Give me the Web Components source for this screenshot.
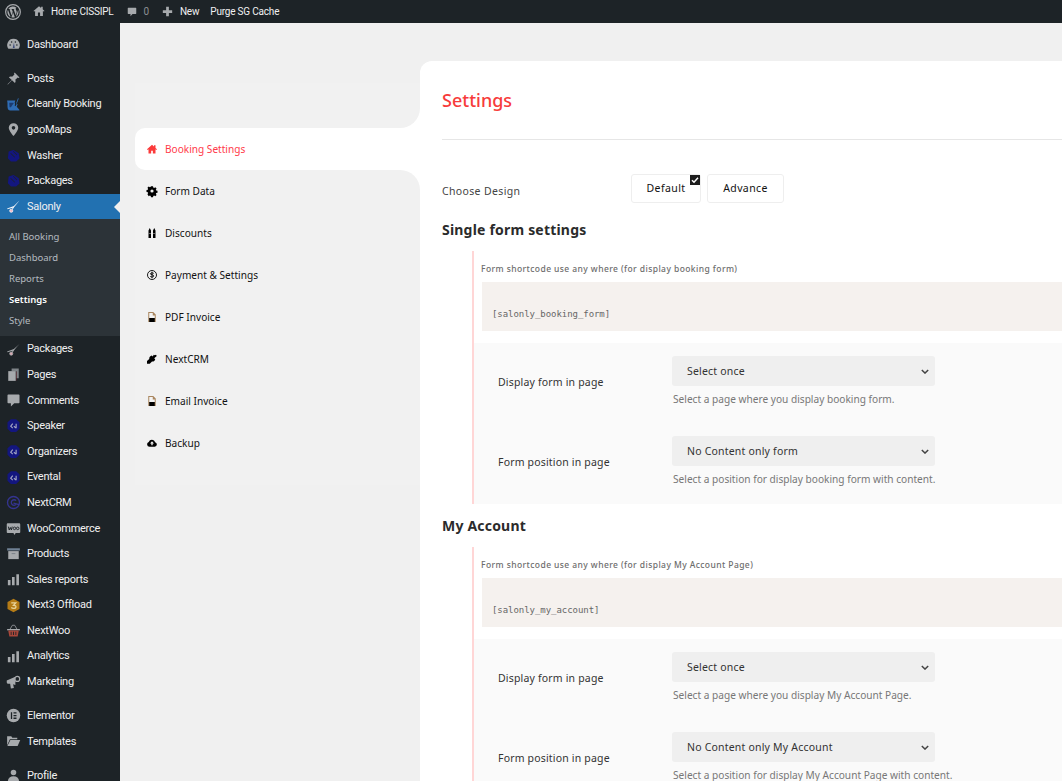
<!DOCTYPE html>
<html>
<head>
<meta charset="utf-8">
<title>Settings</title>
<style>
  html, body { margin: 0; height: 100%; overflow: hidden; background: #f0f0f0; }
  body { font-family: "Noto Sans", "Open Sans", sans-serif; }
</style>
</head>
<body>
<wp-shell>
  <wp-adminbar slot="bar"></wp-adminbar>
  <wp-sidebar slot="side">
    <wp-menu-item icon="dashboard">Dashboard</wp-menu-item>
    <wp-menu-sep></wp-menu-sep>
    <wp-menu-item icon="pin">Posts</wp-menu-item>
    <wp-menu-item icon="cleanly">Cleanly Booking</wp-menu-item>
    <wp-menu-item icon="location">gooMaps</wp-menu-item>
    <wp-menu-item icon="washer">Washer</wp-menu-item>
    <wp-menu-item icon="washer">Packages</wp-menu-item>
    <wp-menu-item icon="scissorsOn" current>Salonly</wp-menu-item>
    <wp-submenu>
      <wp-sub-item>All Booking</wp-sub-item>
      <wp-sub-item>Dashboard</wp-sub-item>
      <wp-sub-item>Reports</wp-sub-item>
      <wp-sub-item current>Settings</wp-sub-item>
      <wp-sub-item>Style</wp-sub-item>
    </wp-submenu>
    <wp-menu-item icon="scissors">Packages</wp-menu-item>
    <wp-menu-item icon="pages">Pages</wp-menu-item>
    <wp-menu-item icon="comment">Comments</wp-menu-item>
    <wp-menu-item icon="hex">Speaker</wp-menu-item>
    <wp-menu-item icon="hex">Organizers</wp-menu-item>
    <wp-menu-item icon="hex">Evental</wp-menu-item>
    <wp-menu-item icon="nextcrm">NextCRM</wp-menu-item>
    <wp-menu-item icon="woo">WooCommerce</wp-menu-item>
    <wp-menu-item icon="archive">Products</wp-menu-item>
    <wp-menu-item icon="bars">Sales reports</wp-menu-item>
    <wp-menu-item icon="next3">Next3 Offload</wp-menu-item>
    <wp-menu-item icon="basket">NextWoo</wp-menu-item>
    <wp-menu-item icon="bars">Analytics</wp-menu-item>
    <wp-menu-item icon="megaphone">Marketing</wp-menu-item>
    <wp-menu-sep></wp-menu-sep>
    <wp-menu-item icon="elementor">Elementor</wp-menu-item>
    <wp-menu-item icon="folder">Templates</wp-menu-item>
    <wp-menu-sep></wp-menu-sep>
    <wp-menu-item icon="user">Profile</wp-menu-item>
  </wp-sidebar>
  <settings-nav slot="nav">
    <nav-item icon="house" active>Booking Settings</nav-item>
    <nav-item icon="gear">Form Data</nav-item>
    <nav-item icon="tags">Discounts</nav-item>
    <nav-item icon="dollar">Payment &amp; Settings</nav-item>
    <nav-item icon="file">PDF Invoice</nav-item>
    <nav-item icon="plug">NextCRM</nav-item>
    <nav-item icon="file">Email Invoice</nav-item>
    <nav-item icon="cloud">Backup</nav-item>
  </settings-nav>
  <settings-panel slot="panel">
    <form-block heading="Single form settings"
      caption="Form shortcode use any where (for display booking form)"
      code="[salonly_booking_form]">
      <form-row label="Display form in page" value="Select once" help="Select a page where you display booking form."></form-row>
      <form-row label="Form position in page" value="No Content only form" help="Select a position for display booking form with content."></form-row>
    </form-block>
    <form-block heading="My Account"
      caption="Form shortcode use any where (for display My Account Page)"
      code="[salonly_my_account]">
      <form-row label="Display form in page" value="Select once" help="Select a page where you display My Account Page."></form-row>
      <form-row label="Form position in page" value="No Content only My Account" help="Select a position for display My Account Page with content."></form-row>
    </form-block>
  </settings-panel>
</wp-shell>

<script>
const G = '#a7aaad';
const ICONS = {
  wp: `<circle cx="10" cy="10" r="9.200" fill="none" stroke="${G}" stroke-width="1.500"/><path fill="${G}" d="M3 10c0 2.800 1.700 5.200 4 6.300L3.700 7.200A7 7 0 0 0 3 10zm11.600-.3c0-.9-.3-1.500-.6-2-.3-.5-.7-1-.7-1.500 0-.6.5-1.200 1.100-1.200h.1A7 7 0 0 0 4.100 6.200h.5c.7 0 1.900-.1 1.900-.1.400 0 .4.500 0 .6 0 0-.4 0-.8.100l2.500 7.500 1.500-4.600-1.100-2.900c-.4 0-.7-.1-.7-.1-.4 0-.3-.6 0-.6 0 0 1.100.1 1.900.1.700 0 1.900-.1 1.900-.1.400 0 .4.500 0 .6 0 0-.4 0-.8.100l2.500 7.400.7-2.300c.3-.9.500-1.300.500-1.800zm-4.500.9-2.100 6a7 7 0 0 0 4.300-.1l-.1-.1-2.100-5.800zm6-3.900.1.700c0 .7-.1 1.500-.5 2.400l-2.100 6.100a7 7 0 0 0 2.500-9.200z"/>`,
  home: `<path fill="${G}" d="M10 2 0.800 9.800 2 11l1.500-1.100V18.500h4.700V12.500h3.600v6h4.700V9.900L18 11l1.200-1.200-3-2.600V3H13.500v2z"/>`,
  bubble: `<path fill="${G}" d="M2.500 1.500h15c.6 0 1 .4 1 1V13c0 .6-.4 1-1 1H11l-4 4.500V14H2.500c-.6 0-1-.4-1-1V2.500c0-.6.4-1 1-1z"/>`,
  plus: `<path fill="${G}" d="M7.500 1.500h5v6h6v5h-6v6h-5v-6h-6v-5h6z"/>`,
  dashboard: `<path fill="${G}" d="M10 2.500a8.300 8.300 0 0 0-6.800 13.200h13.600A8.300 8.300 0 0 0 10 2.500z"/><g fill="#1d2327"><circle cx="5.500" cy="10.500" r="1"/><circle cx="7.500" cy="6.600" r="1"/><circle cx="12.500" cy="6.600" r="1"/><circle cx="14.500" cy="10.500" r="1"/><path fill="#3b4a7a" d="M9 14.500l1.600-7 1 7z"/></g>`,
  pin: `<path fill="${G}" d="M11.500 2 18 8.500l-1.300.7-1.100-.7-3.200 3.200c.7 1.600.4 3.200-.5 4.300L8 12.300 2.500 18 2 17.500 7.700 12 3.800 8.200c1.100-.9 2.700-1.200 4.300-.5l3.200-3.200-.6-1.100z"/>`,
  cleanly: `<path fill="#2f6db5" d="M1.500 4.500h11l-.9 2.800c.6 1.400.6 2.900 0 4.300l.9.600 2-3.200 1 .5-1.200 3.500 3.500 4v1H6c-2.800 0-4-2-4-5.500 0-3 .2-4.800-.5-8z"/><path fill="#1c3b70" d="M4.300 7.500h5.700v1.200L6.500 13.500H4.800z"/><path fill="#2f6db5" d="M16 1.500l1 .5-2.700 7-1-.4z"/>`,
  location: `<path fill="${G}" fill-rule="evenodd" d="M10 1.500a6.300 6.300 0 0 0-6.300 6.300C3.700 12 10 18.800 10 18.800s6.300-6.800 6.300-11A6.300 6.300 0 0 0 10 1.500zm0 8.700A2.400 2.400 0 1 1 10 5.400a2.400 2.400 0 0 1 0 4.800z"/>`,
  washer: `<path fill="#13167f" d="M3.500 4.500 10 2.500l7 4.500 1 7-4.500 4H6.500L2.500 13.500z"/><path fill="#1d2327" d="M10 4l5 5-.7.700L9.300 4.700zM6.500 6.500l5.500 5.500-.7.700L5.800 7.200z"/>`,
  scissors: `<path fill="${G}" d="M18 2.500 10.500 9.300 1.500 12.500l.4 1L9 11.500 7.700 13.800l1 .6 2.300-3.600 3-3.800z"/><circle cx="7" cy="15.500" r="2.100" fill="#d9a8b0" stroke="${G}" stroke-width="1"/>`,
  scissorsOn: `<path fill="#f4f6fa" d="M18 2 10.500 9.300 1.500 12.500l.4 1.200L9 11.500 7.700 13.800l1 .6 2.300-3.600 3-3.800z"/><circle cx="7" cy="15.700" r="2.100" fill="#f4b6c4" stroke="#f4f6fa" stroke-width="1"/>`,
  pages: `<path fill="#7f8488" d="M7.500 2h9.500v13h-3V5.500H7.500z"/><path fill="${G}" d="M3 5.500h10V18.500H3z"/><path fill="#7a2530" d="M13.300 6h.9v12h-.9z" opacity=".6"/>`,
  comment: `<path fill="${G}" d="M3 2h14c.6 0 1 .4 1 1v9.500c0 .6-.4 1-1 1h-6L6.500 18v-4.500H3c-.6 0-1-.4-1-1V3c0-.6.4-1 1-1z"/>`,
  hex: `<path fill="#13167f" d="M6.500 1.500h7l4.500 4.300v8.400l-4.500 4.300h-7l-4.500-4.300V5.800z"/><path fill="none" stroke="#a5a7c4" stroke-width="1.500" d="M9 7.500 6.300 11 9 13.500M13.500 7.500v6M10.500 11l3 2.500"/>`,
  nextcrm: `<circle cx="10" cy="10" r="8" fill="none" stroke="#34348f" stroke-width="1.800"/><path fill="none" stroke="#34348f" stroke-width="1.800" d="M13.500 7.500a3.700 3.700 0 1 0 0 5"/><path fill="none" stroke="#34348f" stroke-width="1.600" d="M10 10.800l7.500 2"/>`,
  woo: `<path fill="${G}" d="M2.500 3h15c.8 0 1.500.7 1.500 1.500v10c0 .8-.7 1.500-1.500 1.500H13l-2 2.500-1-2.500H2.500C1.700 16 1 15.300 1 14.500v-10C1 3.700 1.700 3 2.500 3z"/><path fill="none" stroke="#1d2327" stroke-width="1.300" d="M3.200 7.500l1.100 4.500 1.500-3.300L7.200 12l1.100-4.500"/><circle cx="11.300" cy="9.800" r="1.700" fill="none" stroke="#1d2327" stroke-width="1.200"/><circle cx="15.600" cy="9.800" r="1.700" fill="none" stroke="#1d2327" stroke-width="1.200"/>`,
  archive: `<path fill="#6f8194" d="M1.500 3h17v3H1.500z"/><path fill="${G}" d="M3 6.800h14V17.500H3z"/><path fill="#7b8189" d="M7.500 9.500h5v1.300h-5z"/>`,
  bars: `<path fill="${G}" d="M2.500 10.500h3.500V17.500H2.500zM8 6.800h3.500V17.500H8zM13.800 3h3.500v14.500h-3.500z"/>`,
  next3: `<path fill="#b47b16" d="M10 1l8 4.400v9.200L10 19l-8-4.400V5.400z"/><path fill="none" stroke="#e8d49b" stroke-width="1.700" d="M7 6.500h6l-3 3.200c2.400 0 3.600 1.200 3.200 2.600-.5 2-4.200 2.200-6.200.4"/>`,
  basket: `<path fill="${G}" d="M1.500 8h17v1.800h-17z"/><path fill="none" stroke="${G}" stroke-width="1" d="M5.500 8 8.500 3h3l3 5"/><path fill="#a8473a" d="M3 10h14l-1.500 8h-11z"/><path fill="#1d2327" d="M6.300 11.500h1.100v4.500H6.300zM9.400 11.500h1.200v4.500H9.400zM12.600 11.500h1.100v4.500h-1.100z"/>`,
  megaphone: `<path fill="${G}" d="M1 8.500 12.500 3.500v11L9.500 13.500l1 5-4 .7L5.500 13H3c-1.200 0-2-.8-2-2z"/><circle cx="15" cy="6.500" r="3.300" fill="none" stroke="${G}" stroke-width="1.600"/>`,
  elementor: `<circle cx="10" cy="10" r="9" fill="${G}"/><path fill="#1d2327" d="M6.500 5.500h1.700v9H6.500zM10 5.500h4v1.700h-4zM10 9.200h4v1.700h-4zM10 12.800h4v1.700h-4z"/>`,
  folder: `<path fill="${G}" d="M1.500 3h5.500l1.500 2H15v2H5.200L2.500 13 1.500 15z"/><path fill="${G}" d="M5.800 8H19l-3.500 8H1.800z"/>`,
  user: `<circle cx="10" cy="6" r="3.700" fill="${G}"/><path fill="${G}" d="M2.500 18c0-4.500 3-7 7.500-7s7.500 2.500 7.500 7v2h-15z"/>`,
  house: `<path fill="currentColor" d="M10 1.500 0 10.500l1.300 1.300L3 10.400V19h5.300v-5.500h3.400V19H17v-8.600l1.700 1.400L20 10.500l-3-2.700V2.500h-3v2.600z"/>`,
  gear: `<path fill="currentColor" fill-rule="evenodd" d="M8 .5h4l.6 2.700 1.600.7 2.400-1.500 2.500 2.600-1.400 2.400.7 1.600 2.600.6v3.800l-2.600.6-.7 1.600 1.400 2.400-2.500 2.600-2.400-1.500-1.600.7-.6 2.700H8l-.6-2.700-1.600-.7-2.400 1.500L.9 16.400l1.400-2.400-.7-1.600L-1 11.800V8l2.600-.6.7-1.600L.9 3.400 3.400.8l2.400 1.500 1.600-.7zM10 6.800a3.200 3.200 0 1 0 0 6.400 3.200 3.200 0 0 0 0-6.400z"/>`,
  tags: `<path fill="currentColor" d="M3 5 5.500 0 8 5V20H3zM12 5l2.500-5L17 5V20h-5z"/><path fill="#8a8a8a" d="M3 10h5v1.500H3zM12 10h5v1.500h-5z"/>`,
  dollar: `<circle cx="10" cy="10" r="9" fill="none" stroke="currentColor" stroke-width="1.800"/><path fill="none" stroke="currentColor" stroke-width="1.800" d="M13.500 6.800c-1-1.200-6-1.600-6.700.5-.9 2.400 6.900 1.700 6.700 4.800-.2 2.400-5.500 2.400-7 .7M10 3.500v13"/>`,
  file: `<path fill="#a9865f" d="M2.500 0h10l5 5v15h-15z"/><path fill="#f4f4f4" d="M4.500 2h7v5h4v5h-11z"/><path fill="currentColor" d="M4.500 12h11v8h-11z"/>`,
  plug: `<path fill="currentColor" d="M19.500 4 14.500 8.500l2 2.500c-1 3-4 4.800-6.500 4L5.500 19.500 0 19.500 0 14 4.500 10C4 7 6.500 3.500 9.500 3l2 2 2-3.500 2 1L18 1.500z"/>`,
  cloud: `<path fill="currentColor" d="M5 17.500A5 5 0 0 1 3.500 7.800 6.800 6.800 0 0 1 16.300 8.300a4.700 4.700 0 0 1-.8 9.200z"/><path fill="#f1f1f1" d="M10 6.500 6 11h2.700v3.500h2.600V11H14z"/>`
};

function svgIcon(name, size) {
  return `<svg width="${size}" height="${size}" viewBox="0 0 20 20" style="overflow:visible" aria-hidden="true">${ICONS[name] || ''}</svg>`;
}

// small base class: sets the shadow root from a template string
class Base extends HTMLElement {
  constructor() {
    super();
    this.attachShadow({ mode: 'open' });
  }
  connectedCallback() {
    this.shadowRoot.innerHTML = this.render();
  }
}

class WpShell extends Base {
  render() {
    return `
      <style>
        :host { display: flex; flex-direction: column; height: 781px; overflow: hidden; }
        .body { flex: 1; display: flex; min-height: 0; }
        .main { flex: 1; display: flex; padding-top: 38px; min-width: 0; background: #f0f0f0; }
      </style>
      <slot name="bar"></slot>
      <div class="body">
        <slot name="side"></slot>
        <div class="main">
          <slot name="nav"></slot>
          <slot name="panel"></slot>
        </div>
      </div>`;
  }
}

class WpAdminbar extends Base {
  render() {
    return `
      <style>
        :host { display: flex; align-items: center; height: 23px; background: #1d2327; color: #f0f0f1;
          font: 10px/23px Roboto, sans-serif; letter-spacing: -.2px; white-space: nowrap; }
        .logo { display: flex; margin-left: 5px; width: 16px; }
        .i { display: flex; align-items: center; }
        .home { margin-left: 12px; gap: 6px; }
        .home svg { margin-top: -1px; }
        .c { margin-left: 13px; gap: 7px; color: #8c8f94; }
        .n { margin-left: 13px; gap: 7px; }
        .p { margin-left: 11px; }
      </style>
      <span class="logo">${svgIcon('wp', 16)}</span>
      <span class="i home">${svgIcon('home', 12)}<span>Home CISSIPL</span></span>
      <span class="i c">${svgIcon('bubble', 10)}<span>0</span></span>
      <span class="i n">${svgIcon('plus', 11)}<span>New</span></span>
      <span class="i p">Purge SG Cache</span>`;
  }
}

class WpSidebar extends Base {
  render() {
    return `
      <style>
        :host { display: block; width: 120px; flex: none; background: #1d2327; padding-top: 8.800px; overflow: hidden; }
      </style>
      <slot></slot>`;
  }
}

class WpMenuItem extends Base {
  render() {
    const cur = this.hasAttribute('current');
    return `
      <style>
        :host { display: flex; align-items: center; height: 25.600px; position: relative;
          color: #f0f0f1; font: 11px/15.600px Roboto, sans-serif; letter-spacing: -.26px; white-space: nowrap;
          background: ${cur ? '#2271b1' : 'transparent'}; }
        .ic { display: flex; width: 15px; height: 15px; margin-left: 6px; margin-right: 6px; flex: none; }
        .arrow { position: absolute; right: 0; top: 7px; width: 0; height: 0;
          border: 6px solid transparent; border-left: 0; border-right-color: #f0f0f0; }
      </style>
      <span class="ic">${svgIcon(this.getAttribute('icon'), 15)}</span><slot></slot>
      ${cur ? '<span class="arrow"></span>' : ''}`;
  }
}

class WpMenuSep extends Base {
  render() {
    return `<style>:host { display: block; height: 8.400px; }</style>`;
  }
}

class WpSubmenu extends Base {
  render() {
    return `<style>:host { display: block; background: #2c3338; padding: 7px 0 5px; }</style><slot></slot>`;
  }
}

class WpSubItem extends Base {
  render() {
    const cur = this.hasAttribute('current');
    return `
      <style>
        :host { display: block; height: 21px; padding-left: 9px; white-space: nowrap;
          font: ${cur ? 600 : 400} 9.500px/21px "Noto Sans", sans-serif;
          color: ${cur ? '#fff' : 'rgba(240,246,252,.7)'}; }
      </style><slot></slot>`;
  }
}

class SettingsNav extends Base {
  render() {
    return `
      <style>
        :host { display: flex; flex-direction: column; flex: none; width: 285px; margin: 22px 0 0 15px; }
        .wrap { background: linear-gradient(to right, #f1f1f1 0 20px, #fff 20px); }
        .top { height: 45px; background: #f1f1f1; border-bottom-right-radius: 20px; }
        ::slotted([active]) { background: #fff; border-radius: 10px 0 0 10px; }
        .rest { background: #f1f1f1; border-top-right-radius: 20px; padding-bottom: 21px; }
      </style>
      <div class="wrap">
        <div class="top"></div>
        <slot name="first"></slot>
        <div class="rest"><slot></slot></div>
      </div>`;
  }
  connectedCallback() {
    super.connectedCallback();
    const active = this.querySelector('[active]');
    if (active) active.slot = 'first';
  }
}

class NavItem extends Base {
  render() {
    const active = this.hasAttribute('active');
    return `
      <style>
        :host { display: flex; align-items: center; height: 42px; padding-left: 12px; gap: 8px; white-space: nowrap;
          font: 10.100px/16px "Noto Sans", sans-serif; color: ${active ? '#ff3a4a' : '#111'}; }
        .ic { display: flex; width: 10px; height: 10px; }
      </style>
      <span class="ic" style="color:${active ? '#fb3a3a' : '#000'}">${svgIcon(this.getAttribute('icon'), 10)}</span>
      <slot></slot>`;
  }
}

class SettingsPanel extends Base {
  render() {
    return `
      <style>
        :host { display: block; flex: 1; min-width: 0; background: #fff; border-top-left-radius: 12px;
          padding-left: 22px; font-family: "Noto Sans", sans-serif; overflow: hidden; }
        h1 { margin: 0; padding-top: 27px; font: 500 18px/24px "Noto Sans", sans-serif; color: #f73b3b; }
        hr { margin: 27px 0 0; border: 0; border-top: 1px solid #e6e6e6; }
        .design { display: flex; margin-top: 34px; }
        .lbl { width: 189px; padding-top: 9px; font: 10.500px/16px "Noto Sans", sans-serif; letter-spacing: .35px; color: #444; flex: none; }
        .btns { display: flex; gap: 6px; }
        .btn { height: 27px; position: relative; border: 1px solid #eee; border-radius: 3px; background: #fff;
          font: 10.500px/27px "Noto Sans", sans-serif; letter-spacing: .4px; color: #111; text-align: center; }
        .d { width: 68px; }
        .a { width: 75px; }
        .check { position: absolute; right: 0; top: 0; width: 10px; height: 10px; background: #1d1d1d; display: flex;
          align-items: center; justify-content: center; }
      </style>
      <h1>Settings</h1>
      <hr>
      <div class="design">
        <div class="lbl">Choose Design</div>
        <div class="btns">
          <div class="btn d">Default<span class="check"><svg width="8" height="8" viewBox="0 0 8 8"><path d="M1 4.200 3 6.200 7 1.800" fill="none" stroke="#fff" stroke-width="1.500"/></svg></span></div>
          <div class="btn a">Advance</div>
        </div>
      </div>
      <slot></slot>`;
  }
}

class FormBlock extends Base {
  render() {
    return `
      <style>
        :host { display: block; }
        h3 { margin: 17px 0 11px; font: 700 14px/20px "Noto Sans", sans-serif; letter-spacing: .2px; color: #2b2b2b; }
        :host(:last-child) h3 { margin-top: 12px; }
        .box { margin-left: 30px; border-left: 2px solid #ffd6d6; }
        .cap { padding: 11px 0 6px 7px; font: 500 8.500px/14px "Noto Sans", sans-serif; letter-spacing: .42px; color: #6d6d6d; }
        .code { margin-left: 8px; height: 49px; box-sizing: border-box; padding: 25px 0 0 10px; background: #f5f1ee;
          font: 400 9px/14px "DejaVu Sans Mono", "Liberation Mono", monospace; letter-spacing: -.05px; color: #666; }
        .rows { margin-top: 12px; background: #fafafa; padding-top: 13px; }
      </style>
      <h3>${this.getAttribute('heading')}</h3>
      <div class="box">
        <div class="cap">${this.getAttribute('caption')}</div>
        <div class="code">${this.getAttribute('code')}</div>
        <div class="rows"><slot></slot></div>
      </div>`;
  }
}

class FormRow extends Base {
  render() {
    return `
      <style>
        :host { display: flex; padding-left: 24px; height: 80px; font-family: "Noto Sans", sans-serif; white-space: nowrap; }
        :host(:last-child) { height: 68px; }
        .label { width: 174px; flex: none; padding-top: 18px; font: 10.500px/16px "Noto Sans", sans-serif; letter-spacing: .18px; color: #333; }
        .sel { display: flex; align-items: center; justify-content: space-between; width: 263px; height: 30px; box-sizing: border-box;
          padding: 0 6px 0 15px; background: #efefef; border-radius: 3px;
          font: 10.500px/16px "Noto Sans", sans-serif; letter-spacing: .2px; color: #333; }
        .help { margin: 5px 0 0 1px; font: 10.150px/16px "Noto Sans", sans-serif; color: #777; }
      </style>
      <div class="label">${this.getAttribute('label')}</div>
      <div>
        <div class="sel"><span>${this.getAttribute('value')}</span>
          <svg width="8" height="5" viewBox="0 0 10 6"><path d="M1 1 5 5 9 1" fill="none" stroke="#444" stroke-width="1.800"/></svg>
        </div>
        <div class="help">${this.getAttribute('help')}</div>
      </div>`;
  }
}

customElements.define('wp-shell', WpShell);
customElements.define('wp-adminbar', WpAdminbar);
customElements.define('wp-sidebar', WpSidebar);
customElements.define('wp-menu-item', WpMenuItem);
customElements.define('wp-menu-sep', WpMenuSep);
customElements.define('wp-submenu', WpSubmenu);
customElements.define('settings-nav', SettingsNav);
customElements.define('wp-sub-item', WpSubItem);
customElements.define('nav-item', NavItem);
customElements.define('settings-panel', SettingsPanel);
customElements.define('form-block', FormBlock);
customElements.define('form-row', FormRow);
</script>
</body>
</html>
